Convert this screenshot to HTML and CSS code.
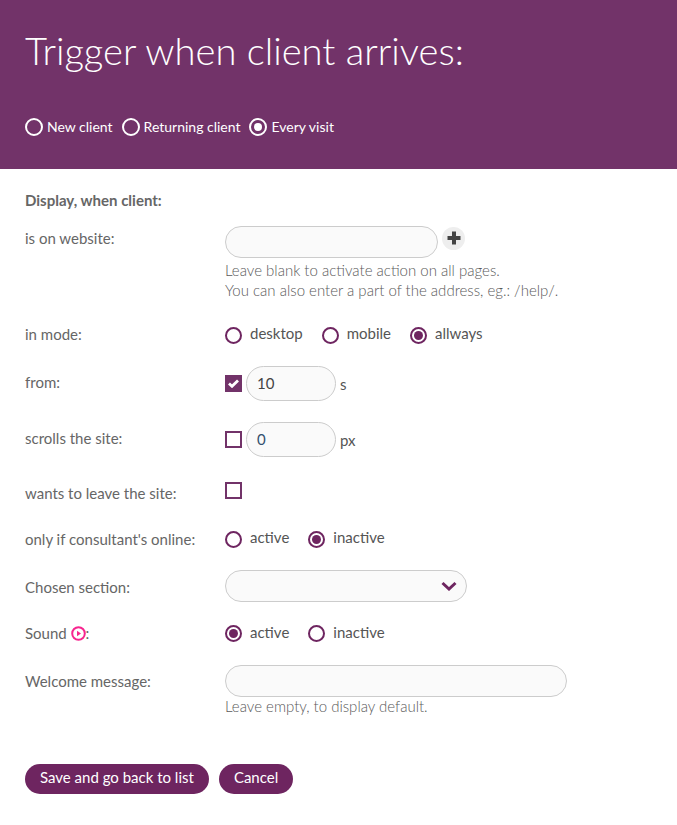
FILE: index.html
```html
<!DOCTYPE html>
<html lang="en">
<head>
<meta charset="utf-8">
<title>Trigger</title>
<link rel="stylesheet" href="styles.css">
</head>
<body>
<header class="hero">
  <h1 class="hero-title">Trigger when client arrives:</h1>
  <div class="hero-options">
    <label class="hero-opt"><span class="radio-w"></span>New client</label>
    <label class="hero-opt"><span class="radio-w"></span>Returning client</label>
    <label class="hero-opt"><span class="radio-w on"></span>Every visit</label>
  </div>
</header>
<main class="form">
  <div class="heading">Display, when client:</div>

  <div class="row row-website">
    <div class="label">is on website:</div>
    <div class="field">
      <div class="line">
        <span class="input input-site"></span>
        <span class="plus"><svg width="14" height="14" viewBox="0 0 14 14"><path d="M5 0.5h4v4.5h4.5v4h-4.5v4.500h-4v-4.500h-4.500v-4h4.500z" fill="#444"/></svg></span>
      </div>
      <p class="help help-site">Leave blank to activate action on all pages.<br>You can also enter a part of the address, eg.: /help/.</p>
    </div>
  </div>

  <div class="row row-radio row-mode">
    <div class="label">in mode:</div>
    <div class="radios">
      <label class="opt"><span class="radio"></span>desktop</label>
      <label class="opt"><span class="radio"></span>mobile</label>
      <label class="opt"><span class="radio on"></span>allways</label>
    </div>
  </div>

  <div class="row row-num">
    <div class="label">from:</div>
    <div class="line">
      <span class="check on"><svg width="11" height="9" viewBox="0 0 11 9"><path d="M1 4.500l3 2.800 6-5.800" fill="none" stroke="#fff" stroke-width="2.800"/></svg></span>
      <span class="input input-num">10</span>
      <span class="unit">s</span>
    </div>
  </div>

  <div class="row row-num">
    <div class="label">scrolls the site:</div>
    <div class="line">
      <span class="check"></span>
      <span class="input input-num input-zero">0</span>
      <span class="unit">px</span>
    </div>
  </div>

  <div class="row row-leave">
    <div class="label">wants to leave the site:</div>
    <div class="line"><span class="check"></span></div>
  </div>

  <div class="row row-radio row-online">
    <div class="label">only if consultant's online:</div>
    <div class="radios">
      <label class="opt"><span class="radio"></span>active</label>
      <label class="opt"><span class="radio on"></span>inactive</label>
    </div>
  </div>

  <div class="row row-select">
    <div class="label">Chosen section:</div>
    <div class="input input-select">
      <svg width="16" height="10" viewBox="0 0 16 10"><path d="M1.500 2l6.500 6 6.500-6" fill="none" stroke="#6e2560" stroke-width="3"/></svg>
    </div>
  </div>

  <div class="row row-radio row-sound">
    <div class="label">Sound <svg class="play" width="15" height="15" viewBox="0 0 15 15"><circle cx="7.500" cy="7.500" r="6.300" fill="none" stroke="#f7258f" stroke-width="2"/><path d="M6 4.800l4 2.700-4 2.700z" fill="#f7258f"/></svg>:</div>
    <div class="radios">
      <label class="opt"><span class="radio on"></span>active</label>
      <label class="opt"><span class="radio"></span>inactive</label>
    </div>
  </div>

  <div class="row row-welcome">
    <div class="label">Welcome message:</div>
    <div class="field">
      <span class="input input-wide"></span>
      <p class="help help-welcome">Leave empty, to display default.</p>
    </div>
  </div>

  <div class="buttons">
    <button class="btn" type="button">Save and go back to list</button>
    <button class="btn" type="button">Cancel</button>
  </div>
</main>
</body>
</html>
```
FILE: styles.css
```css
* { box-sizing: border-box; }
html, body { margin: 0; padding: 0; }
body {
  background: #fff;
  font-family: Lato, "Liberation Sans", sans-serif;
  font-size: 15px;
  line-height: 20px;
  color: #666;
}
.hero {
  background: #723369;
  height: 169px;
  padding: 25px 25px 0;
  color: #fff;
}
.hero-title {
  margin: 0;
  font-size: 38.200px;
  line-height: 50px;
  font-weight: 300;
}
.hero-options {
  display: flex;
  gap: 9px;
  margin-top: 42px;
}
.hero-opt { display: flex; align-items: center; gap: 4px; font-size: 14px; line-height: 20px; }
.radio-w {
  width: 18px; height: 18px;
  border: 2px solid #fff;
  border-radius: 50%;
  display: flex; align-items: center; justify-content: center;
}
.radio-w.on::after { content: ""; width: 8px; height: 8px; border-radius: 50%; background: #fff; }
.form { padding: 21px 25px 0; }
.heading { font-weight: 700; height: 20px; margin-bottom: 16px; }
.row { display: grid; grid-template-columns: 200px 1fr; }
.label { line-height: 20px; }
.row-website .label { padding-top: 2px; }
.row-mode .label { line-height: 18px; }
.line { display: flex; align-items: center; }
.input {
  display: block;
  background: #fafafa;
  border: 1px solid #ccc;
  border-radius: 18px;
  height: 32px;
}
.input-site { width: 213px; }
.plus {
  width: 23px; height: 23px;
  margin-left: 4px;
  margin-top: -8px;
  border-radius: 50%;
  background: #eee;
  display: flex; align-items: center; justify-content: center;
}
.help { margin: 0; color: #5a5a5a; line-height: 20px; font-weight: 300; }
.help-site { margin-top: 2px; }
.help-welcome { margin-top: -1px; }
.radios { display: flex; gap: 19px; }
.opt { display: flex; align-items: flex-start; gap: 8px; color: #555; line-height: 16px; }
.row-sound .opt { line-height: 18px; }
.radio {
  width: 17px; height: 17px;
  margin-top: 2px;
  border: 2px solid #6e2560;
  border-radius: 50%;
  display: flex; align-items: center; justify-content: center;
}
.radio.on::after { content: ""; width: 9px; height: 9px; border-radius: 50%; background: #6e2560; }
.row-mode { margin-top: 25px; min-height: 20px; }
.row-num { margin-top: 21px; }
.row-num .label { padding-top: 6px; }
.check {
  width: 17px; height: 17px;
  border: 2px solid #723369;
  display: flex; align-items: center; justify-content: center;
}
.check.on { background: #723369; }
.input-num {
  width: 90px; height: 35px;
  margin-left: 4px;
  padding-left: 10px;
  border-radius: 18px;
  font-size: 15px;
  line-height: 33px;
  color: #444;
}
.input-zero { color: #34506e; }
.unit { margin-left: 4px; color: #555; }
.row-leave { margin-top: 21px; }
.row-leave .label { padding-top: 5px; }
.row-online { margin-top: 26px; }
.row-select { margin-top: 21px; }
.row-select .label { padding-top: 7px; }
.input-select {
  width: 242px;
  display: flex; align-items: center; justify-content: flex-end;
  padding-right: 9px;
}
.row-sound { margin-top: 21px; }
.play { vertical-align: -2px; }
.row-welcome { margin-top: 22px; }
.row-welcome .label { padding-top: 6px; }
.input-wide { width: 342px; }
.buttons { display: flex; gap: 10px; margin-top: 48px; }
.btn {
  border: 0;
  height: 30px;
  padding: 0 15px 3px;
  border-radius: 15px;
  background: #6e2560;
  color: #fff;
  font: 400 15px/27px Lato, "Liberation Sans", sans-serif;
}
```
